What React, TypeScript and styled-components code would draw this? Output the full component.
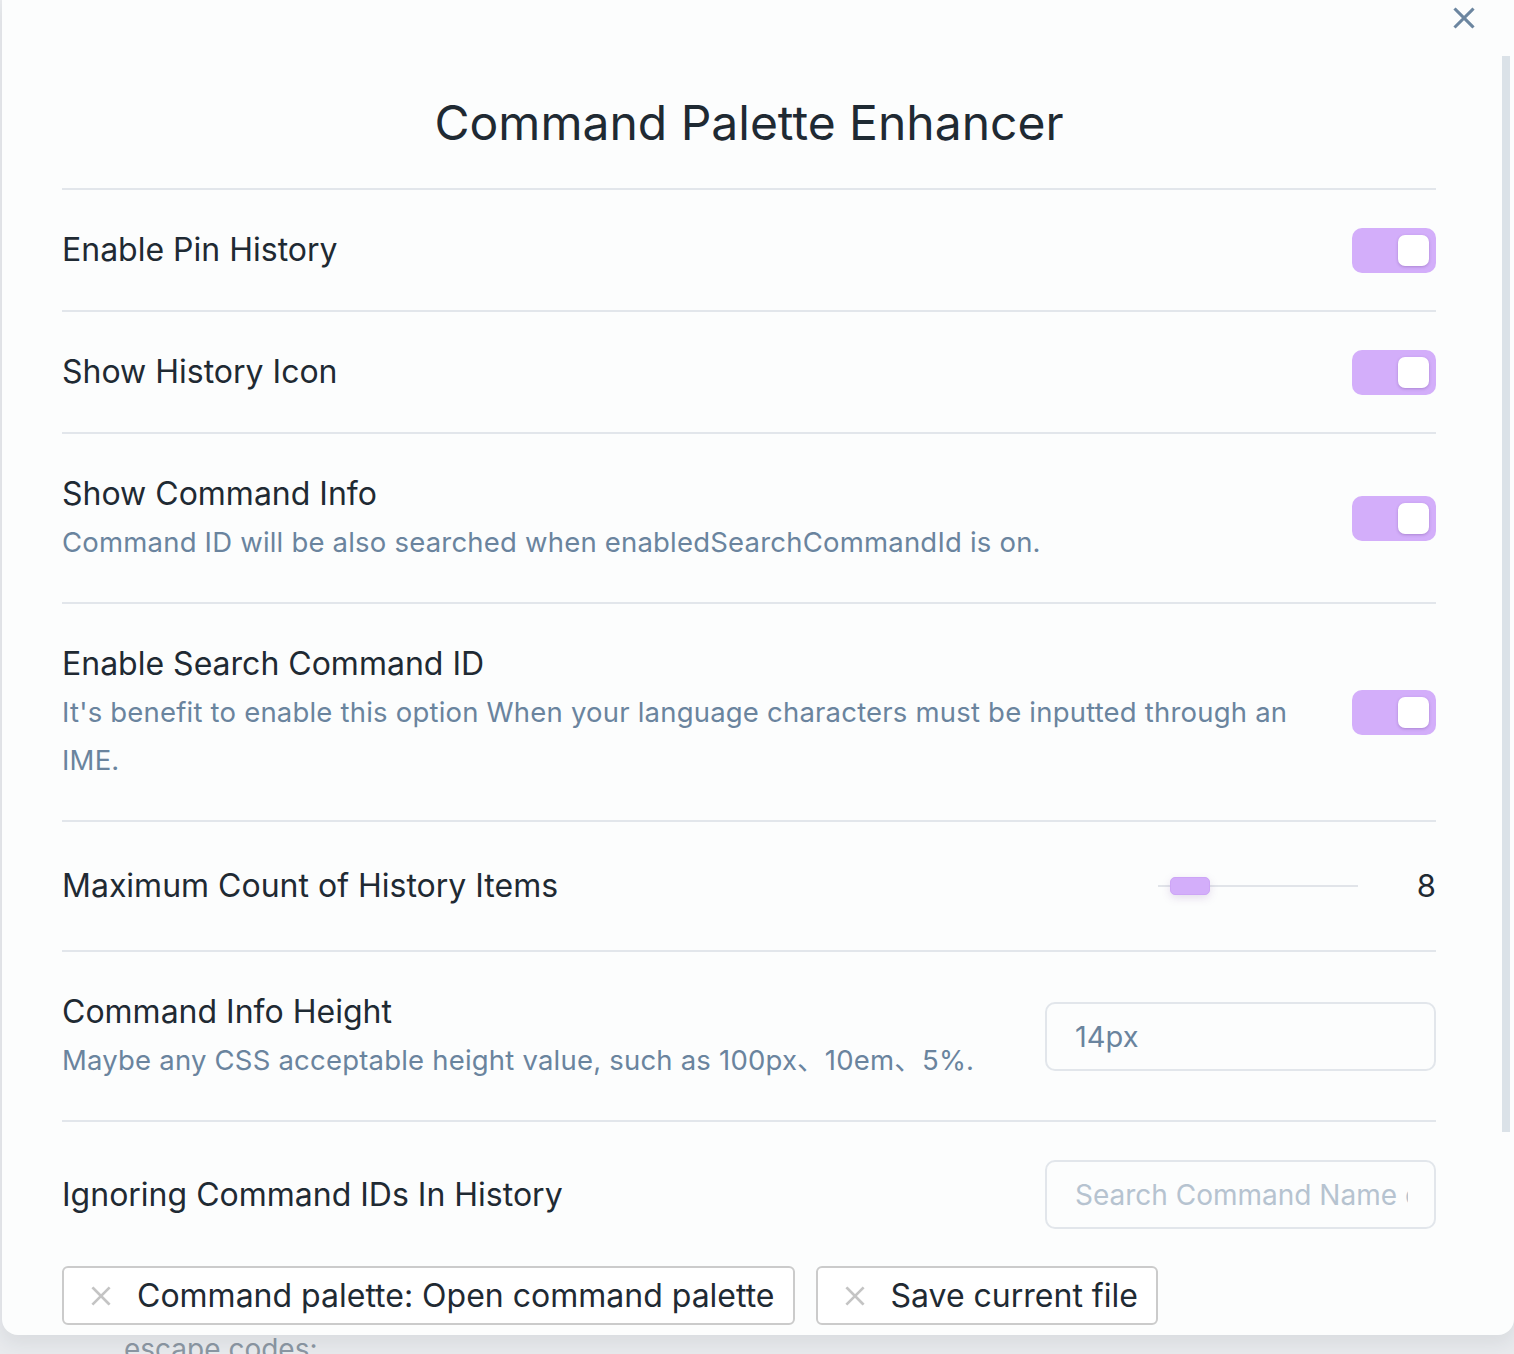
import React from 'react';
import styled, { createGlobalStyle } from 'styled-components';

const GlobalStyle = createGlobalStyle`
  html, body {
    margin: 0;
    padding: 0;
    height: 1354px;
    overflow: hidden;
    background: #e8eaed;
    font-family: Inter, "Noto Sans", "Noto Sans CJK SC", sans-serif;
    -webkit-font-smoothing: antialiased;
  }
  * { box-sizing: border-box; }
`;

const Page = styled.div`
  height: 1354px;
  padding-left: 2px;
`;

const Modal = styled.div`
  position: relative;
  height: 1335px;
  width: 1512px;
  background: #fcfdfd;
  border-radius: 0 0 16px 16px;
  box-shadow: 0 8px 18px rgba(40, 50, 60, 0.08);
  padding: 0 78px 0 60px;
  overflow: hidden;
  z-index: 1;
`;

const CloseButton = styled.button`
  position: absolute;
  top: 5px;
  right: 37px;
  width: 26px;
  height: 26px;
  padding: 0;
  border: none;
  background: none;
  color: #6c86a0;
  display: flex;
  align-items: center;
  justify-content: center;
`;

const ScrollThumb = styled.div`
  position: absolute;
  right: 4px;
  top: 56px;
  width: 8px;
  height: 1076px;
  background: #dbe2e8;
`;

const Title = styled.h1`
  margin: 0;
  padding: 90px 0 32px;
  line-height: 66px;
  font-size: 48px;
  font-weight: 400;
  text-align: center;
  color: #1f2a33;
  border-bottom: 2px solid #e2e6eb;
`;

const Row = styled.div<{ $pad?: number }>`
  display: flex;
  align-items: center;
  justify-content: space-between;
  gap: 56px;
  padding: ${({ $pad }) => $pad ?? 36}px 0;
  border-bottom: 2px solid #e2e6eb;
`;

const Info = styled.div`
  flex: 1;
  min-width: 0;
`;

const Label = styled.div`
  font-size: 32px;
  line-height: 48px;
  color: #1f2a33;
`;

const Desc = styled.div`
  font-size: 27.5px;
  line-height: 48px;
  color: #6a849e;
  letter-spacing: 0.2px;
`;

const Toggle = styled.div`
  flex: none;
  width: 84px;
  height: 45px;
  border-radius: 10px;
  background: #d3aefa;
  padding: 7px;
  display: flex;
  justify-content: flex-end;
`;

const Knob = styled.div`
  width: 31px;
  height: 31px;
  border-radius: 7px;
  background: #ffffff;
  box-shadow: 0 1px 3px rgba(80, 40, 120, 0.3);
`;

const SliderWrap = styled.div`
  flex: none;
  display: flex;
  align-items: center;
  gap: 58px;
`;

const Track = styled.div`
  position: relative;
  width: 200px;
  height: 2px;
  background: #e1e4e9;
`;

const Thumb = styled.div`
  position: absolute;
  left: 12px;
  top: -8px;
  width: 40px;
  height: 18px;
  border-radius: 5px;
  background: #d3aefa;
  border: 1px solid #cda5f6;
  box-shadow: 0 3px 8px rgba(120, 80, 160, 0.18);
`;

const SliderValue = styled.div`
  font-size: 31px;
  line-height: 56px;
  color: #1f2a33;
  width: 20px;
  text-align: right;
`;

const Input = styled.input<{ $text?: number }>`
  flex: none;
  width: 391px;
  height: 69px;
  border: 2px solid #e2e6eb;
  border-radius: 10px;
  background: #fcfdfd;
  padding: 0 26px 0 28px;
  font-family: inherit;
  font-size: ${({ $text }) => $text ?? 28}px;
  color: #6a849e;
  outline: none;

  &::placeholder {
    color: #b6c3d0;
  }
`;

const IgnoreBlock = styled.div`
  padding-top: 38px;
`;

const IgnoreHead = styled.div`
  display: flex;
  align-items: center;
  justify-content: space-between;
`;

const Tags = styled.div`
  display: flex;
  gap: 21px;
  margin-top: 37px;
`;

const Tag = styled.div`
  display: flex;
  align-items: center;
  gap: 25px;
  height: 59px;
  padding: 0 18px 0 26px;
  border: 2px solid #cbcbcb;
  border-radius: 6px;
  background: #ffffff;
  font-size: 32px;
  color: #1f2a33;
  white-space: nowrap;
`;

const TagX = styled.span`
  color: #c4c4c4;
  display: flex;
`;

const Behind = styled.div`
  padding-left: 122px;
  font-size: 28px;
  line-height: 28px;
  color: #8b97a3;
`;

const XIcon = ({ size, stroke }: { size: number; stroke: number }) => (
  <svg width={size} height={size} viewBox="0 0 20 20" fill="none">
    <path d="M3 3L17 17M17 3L3 17" stroke="currentColor" strokeWidth={stroke} strokeLinecap="square" />
  </svg>
);

const toggles = [
  { label: 'Enable Pin History' },
  { label: 'Show History Icon' },
  { label: 'Show Command Info', desc: 'Command ID will be also searched when enabledSearchCommandId is on.' },
  {
    label: 'Enable Search Command ID',
    desc: "It's benefit to enable this option When your language characters must be inputted through an IME.",
  },
];

const tags = ['Command palette: Open command palette', 'Save current file'];

export default function App() {
  return (
    <Page>
      <GlobalStyle />
      <Modal>
        <CloseButton aria-label="close">
          <XIcon size={24} stroke={2.6} />
        </CloseButton>
        <ScrollThumb />
        <Title>Command Palette Enhancer</Title>

        {toggles.map((t) => (
          <Row key={t.label}>
            <Info>
              <Label>{t.label}</Label>
              {t.desc && <Desc>{t.desc}</Desc>}
            </Info>
            <Toggle>
              <Knob />
            </Toggle>
          </Row>
        ))}

        <Row>
          <Info>
            <Label>Maximum Count of History Items</Label>
          </Info>
          <SliderWrap>
            <Track>
              <Thumb />
            </Track>
            <SliderValue>8</SliderValue>
          </SliderWrap>
        </Row>

        <Row>
          <Info>
            <Label>Command Info Height</Label>
            <Desc>Maybe any CSS acceptable height value, such as 100px、10em、5%.</Desc>
          </Info>
          <Input $text={29} defaultValue="14px" />
        </Row>

        <IgnoreBlock>
          <IgnoreHead>
            <Label>Ignoring Command IDs In History</Label>
            <Input placeholder="Search Command Name or ID" />
          </IgnoreHead>
          <Tags>
            {tags.map((t) => (
              <Tag key={t}>
                <TagX>
                  <XIcon size={22} stroke={2.4} />
                </TagX>
                {t}
              </Tag>
            ))}
          </Tags>
        </IgnoreBlock>
      </Modal>
      <Behind>escape codes:</Behind>
    </Page>
  );
}
